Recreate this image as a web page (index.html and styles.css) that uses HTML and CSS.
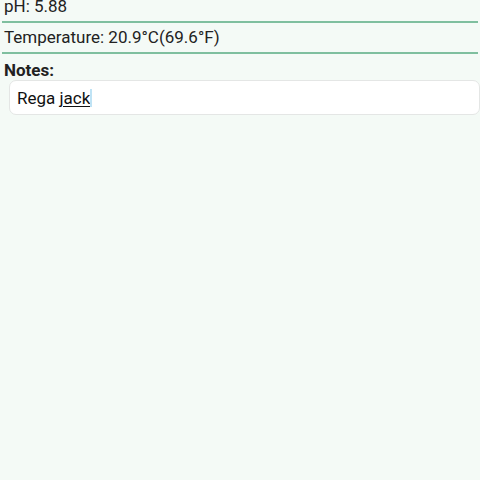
FILE: index.html
```html
<!DOCTYPE html>
<html>
<head>
<meta charset="utf-8">
<link rel="stylesheet" href="styles.css">
</head>
<body>
<div class="page">
  <div class="row">pH: 5.88</div>
  <div class="row">Temperature: 20.9°C(69.6°F)</div>
  <div class="notes">
    <div class="label">Notes:</div>
    <div class="input"><span>Rega </span><span class="sugg">jack</span><span class="caret"></span></div>
  </div>
</div>
</body>
</html>
```
FILE: styles.css
```css
html, body {
  margin: 0;
  padding: 0;
  background: #f4faf6;
  height: 100%;
}
.page {
  font-family: Roboto, "Noto Sans", sans-serif;
  color: #222;
  font-size: 17px;
  line-height: 20px;
  margin-top: -8px;
}
.row {
  margin: 0 2px;
  padding: 4px 2px 5px;
  border-bottom: 2px solid #7fbf9f;
}
.notes {
  padding: 6px 0 0 4px;
}
.label {
  font-weight: bold;
}
.input {
  margin: 0 0 0 5px;
  background: #fff;
  border: 1px solid #e4e6e5;
  border-radius: 7px;
  height: 35px;
  box-sizing: border-box;
  padding: 7px 0 0 7px;
  font-size: 17px;
  line-height: 20px;
  color: #111;
  display: flex;
  align-items: flex-start;
}
.input span { white-space: pre; }
.sugg {
  text-decoration: underline;
  text-underline-offset: 2px;
  text-decoration-thickness: 1px;
}
.caret {
  width: 2px;
  height: 18px;
  margin-top: 1px;
  background: #bfe3f5;
}
```
